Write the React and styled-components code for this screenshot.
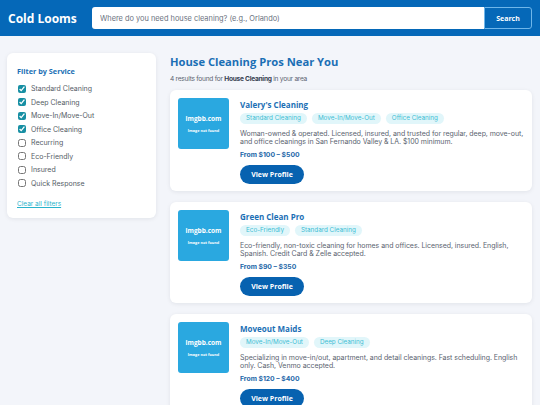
import React from 'react';
import styled, { createGlobalStyle } from 'styled-components';

const GlobalStyle = createGlobalStyle`
  html, body {
    margin: 0;
    padding: 0;
  }
  body {
    background: #f3f5fa;
    font-family: Inter, 'Liberation Sans', sans-serif;
    color: #4b5563;
    -webkit-font-smoothing: antialiased;
  }
  * { box-sizing: border-box; }
`;

const heading = `'Open Sans', Inter, sans-serif`;

const Header = styled.header`
  height: 36px;
  background: #0568b8;
  display: flex;
  align-items: center;
  padding: 0 8px;
  gap: 22px;
`;

const Logo = styled.div`
  font-family: ${heading};
  font-weight: 700;
  font-size: 12px;
  color: #fff;
  white-space: nowrap;
  width: 62px;
`;

const SearchForm = styled.form`
  flex: 1;
  display: flex;
  height: 22px;
`;

const SearchInput = styled.input`
  flex: 1;
  border: none;
  border-radius: 3px 0 0 3px;
  padding: 0 8px;
  font-family: Inter, sans-serif;
  font-size: 7.4px;
  color: #333;
  outline: none;
  &::placeholder { color: #6b7280; }
`;

const SearchButton = styled.button`
  width: 48px;
  border: 1px solid #6fb6ea;
  border-radius: 0 3px 3px 0;
  background: #0568b8;
  color: #fff;
  font-family: ${heading};
  font-weight: 700;
  font-size: 7px;
  padding: 0;
`;

const Layout = styled.div`
  display: flex;
  align-items: flex-start;
  padding: 17px 8px 0 7px;
  gap: 14px;
`;

const Sidebar = styled.aside`
  width: 149px;
  background: #fff;
  border-radius: 6px;
  box-shadow: 0 1px 4px rgba(15, 23, 42, 0.08);
  padding: 13px 10px 8px 10px;
`;

const SideTitle = styled.h3`
  margin: 0 0 6px 0;
  font-family: ${heading};
  font-weight: 700;
  font-size: 7.3px;
  color: #1b6fb5;
`;

const FilterList = styled.div`
  display: flex;
  flex-direction: column;
`;

const FilterRow = styled.label`
  display: flex;
  align-items: center;
  height: 13.5px;
  gap: 5px;
  font-size: 7px;
  color: #555c66;
`;

const Check = styled.input`
  margin: 0 0 0 1px;
  width: 8px;
  height: 8px;
  accent-color: #178fa3;
`;

const ClearLink = styled.a`
  display: inline-block;
  margin-top: 10px;
  font-size: 6.5px;
  color: #28b3cc;
  text-decoration: underline;
`;

const Main = styled.main`
  flex: 1;
`;

const Title = styled.h1`
  margin: 0;
  font-family: ${heading};
  font-weight: 700;
  font-size: 11.2px;
  line-height: 17px;
  color: #1b6fb5;
`;

const Subtitle = styled.p`
  margin: 4px 0 6px 0;
  font-size: 6.6px;
  letter-spacing: -0.25px;
  line-height: 10px;
  color: #5b6470;
  b { color: #374151; }
`;

const CardList = styled.div`
  display: flex;
  flex-direction: column;
  gap: 11px;
`;

const Card = styled.div`
  background: #fff;
  border-radius: 6px;
  box-shadow: 0 1px 4px rgba(15, 23, 42, 0.08);
  padding: 8px 8px 7px 8px;
  display: flex;
  gap: 11px;
`;

const Thumb = styled.div`
  width: 51px;
  height: 51px;
  flex-shrink: 0;
  border-radius: 3px;
  background: #2aa8e0;
  color: #fff;
  display: flex;
  flex-direction: column;
  align-items: center;
  justify-content: center;
  gap: 5px;
  font-family: ${heading};
`;

const ThumbMain = styled.span`
  font-size: 6.5px;
  font-weight: 700;
`;

const ThumbSub = styled.span`
  font-size: 3.8px;
  font-weight: 700;
`;

const Body = styled.div`
  flex: 1;
  display: flex;
  flex-direction: column;
  align-items: flex-start;
`;

const Name = styled.h2`
  margin: 1px 0 0 0;
  font-family: ${heading};
  font-weight: 700;
  font-size: 8px;
  line-height: 11px;
  color: #1b6fb5;
`;

const Tags = styled.div`
  display: flex;
  gap: 5px;
  margin-top: 3px;
`;

const Tag = styled.span`
  height: 11px;
  line-height: 11px;
  padding: 0 6px;
  border-radius: 6px;
  background: #e1f6fa;
  color: #3dbdd4;
  font-size: 6.3px;
`;

const Desc = styled.p`
  margin: 6px 0 0 0;
  font-size: 7px;
  letter-spacing: -0.05px;
  line-height: 8px;
  color: #5b6470;
`;

const Price = styled.div`
  margin-top: 4px;
  font-size: 6.8px;
  font-weight: 700;
  line-height: 9px;
  color: #1d67a8;
`;

const ProfileButton = styled.button`
  margin-top: 6px;
  width: 64px;
  height: 19px;
  border: none;
  border-radius: 10px;
  background: #0762b0;
  color: #fff;
  font-family: ${heading};
  font-weight: 700;
  font-size: 7px;
  padding: 0;
`;

const filters = [
  ['Standard Cleaning', true],
  ['Deep Cleaning', true],
  ['Move-In/Move-Out', true],
  ['Office Cleaning', true],
  ['Recurring', false],
  ['Eco-Friendly', false],
  ['Insured', false],
  ['Quick Response', false],
];

const pros = [
  {
    name: "Valery's Cleaning",
    tags: ['Standard Cleaning', 'Move-In/Move-Out', 'Office Cleaning'],
    desc: 'Woman-owned & operated. Licensed, insured, and trusted for regular, deep, move-out, and office cleanings in San Fernando Valley & LA. $100 minimum.',
    price: 'From $100 – $500',
  },
  {
    name: 'Green Clean Pro',
    tags: ['Eco-Friendly', 'Standard Cleaning'],
    desc: 'Eco-friendly, non-toxic cleaning for homes and offices. Licensed, insured. English, Spanish. Credit Card & Zelle accepted.',
    price: 'From $90 – $350',
  },
  {
    name: 'Moveout Maids',
    tags: ['Move-In/Move-Out', 'Deep Cleaning'],
    desc: 'Specializing in move-in/out, apartment, and detail cleanings. Fast scheduling. English only. Cash, Venmo accepted.',
    price: 'From $120 – $400',
  },
];

function ProCard({ pro }) {
  return (
    <Card>
      <Thumb>
        <ThumbMain>imgbb.com</ThumbMain>
        <ThumbSub>Image not found</ThumbSub>
      </Thumb>
      <Body>
        <Name>{pro.name}</Name>
        <Tags>
          {pro.tags.map((t) => <Tag key={t}>{t}</Tag>)}
        </Tags>
        <Desc>{pro.desc}</Desc>
        <Price>{pro.price}</Price>
        <ProfileButton type='button'>View Profile</ProfileButton>
      </Body>
    </Card>
  );
}

export default function App() {
  return (
    <>
      <GlobalStyle />
      <Header>
        <Logo>Cold Looms</Logo>
        <SearchForm onSubmit={(e) => e.preventDefault()}>
          <SearchInput placeholder='Where do you need house cleaning? (e.g., Orlando)' />
          <SearchButton type='submit'>Search</SearchButton>
        </SearchForm>
      </Header>
      <Layout>
        <Sidebar>
          <SideTitle>Filter by Service</SideTitle>
          <FilterList>
            {filters.map(([label, on]) => (
              <FilterRow key={label}>
                <Check type='checkbox' defaultChecked={on} />
                {label}
              </FilterRow>
            ))}
          </FilterList>
          <ClearLink href='#'>Clear all filters</ClearLink>
        </Sidebar>
        <Main>
          <Title>House Cleaning Pros Near You</Title>
          <Subtitle>4 results found for <b>House Cleaning</b> in your area</Subtitle>
          <CardList>
            {pros.map((p) => <ProCard key={p.name} pro={p} />)}
          </CardList>
        </Main>
      </Layout>
    </>
  );
}
